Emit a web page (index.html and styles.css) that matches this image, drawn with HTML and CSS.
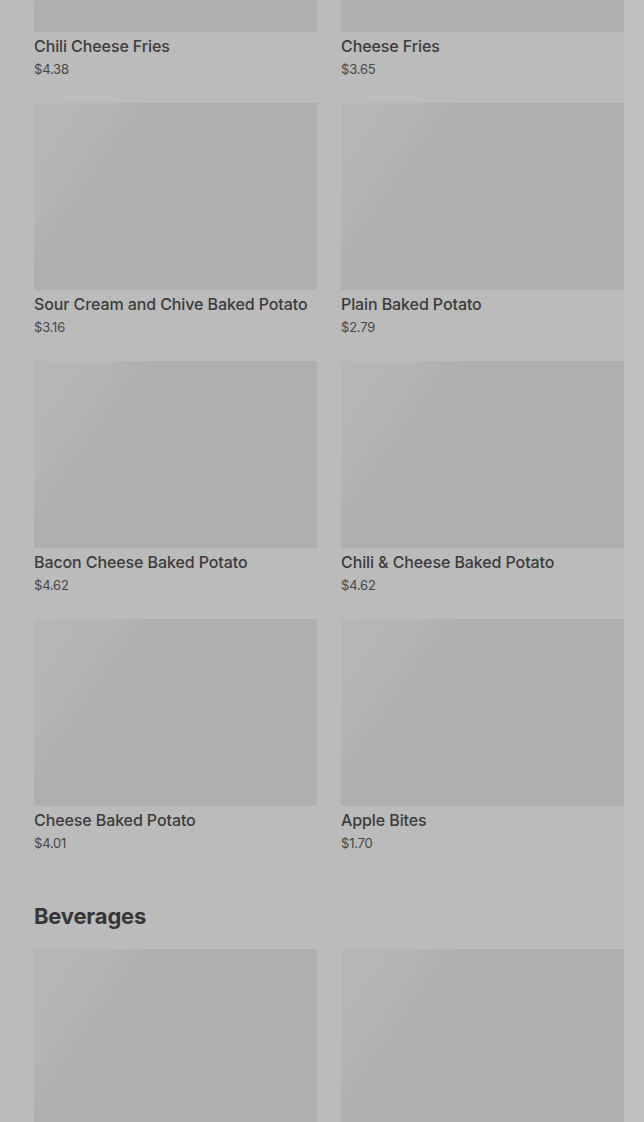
FILE: index.html
```html
<!DOCTYPE html>
<html lang="en">
<head>
  <meta charset="UTF-8">
  <meta name="viewport" content="width=device-width, initial-scale=1.0">
  <title>Menu</title>
  <link rel="stylesheet" href="styles.css">
</head>
<body>
  <div class="page">
    <!-- Sides -->
    <section class="menu-section first">
      <div class="menu-grid">
        <div class="menu-item">
          <div class="item-img"></div>
          <div class="item-name">Chili Cheese Fries</div>
          <div class="item-price">$4.38</div>
        </div>
        <div class="menu-item">
          <div class="item-img"></div>
          <div class="item-name">Cheese Fries</div>
          <div class="item-price">$3.65</div>
        </div>
        <div class="menu-item">
          <div class="item-img"></div>
          <div class="item-name">Sour Cream and Chive Baked Potato</div>
          <div class="item-price">$3.16</div>
        </div>
        <div class="menu-item">
          <div class="item-img"></div>
          <div class="item-name">Plain Baked Potato</div>
          <div class="item-price">$2.79</div>
        </div>
        <div class="menu-item">
          <div class="item-img"></div>
          <div class="item-name">Bacon Cheese Baked Potato</div>
          <div class="item-price">$4.62</div>
        </div>
        <div class="menu-item">
          <div class="item-img"></div>
          <div class="item-name">Chili &amp; Cheese Baked Potato</div>
          <div class="item-price">$4.62</div>
        </div>
        <div class="menu-item">
          <div class="item-img"></div>
          <div class="item-name">Cheese Baked Potato</div>
          <div class="item-price">$4.01</div>
        </div>
        <div class="menu-item">
          <div class="item-img"></div>
          <div class="item-name">Apple Bites</div>
          <div class="item-price">$1.70</div>
        </div>
      </div>
    </section>

    <!-- Beverages -->
    <section class="menu-section">
      <h2 class="section-title">Beverages</h2>
      <div class="menu-grid">
        <div class="menu-item">
          <div class="item-img"></div>
        </div>
        <div class="menu-item">
          <div class="item-img"></div>
        </div>
      </div>
    </section>
  </div>
</body>
</html>
```

FILE: styles.css
```css
/* General Styles */
html, body {
  margin: 0;
  padding: 0;
  height: 100%;
  overflow: hidden;
}

body {
  font-family: 'Inter', 'Liberation Sans', sans-serif;
  background-color: #bfbfbf;
  color: #3b3b3b;
}

.page {
  width: 624px;
  min-height: 100%;
  background-color: #bbbbbb;
  box-sizing: border-box;
  padding-left: 34px;
}

/* Sections */
.menu-section.first {
  margin-top: -155px;
}

.section-title {
  margin: 50px 0 19px;
  font-size: 22px;
  line-height: 28px;
  font-weight: 700;
  letter-spacing: -0.2px;
  color: #363636;
}

.menu-grid {
  display: grid;
  grid-template-columns: 283px 283px;
  column-gap: 24px;
  row-gap: 25px;
}

/* Items - loading placeholders */
.item-img {
  height: 187px;
  background-color: #afafaf;
  background-image: linear-gradient(125deg, #b6b6b6 0%, #b5b5b5 18%, #b1b1b1 25%, #afafaf 30%, #afafaf 100%);
}

.item-name {
  margin-top: 4px;
  font-size: 16px;
  line-height: 20px;
  font-weight: 500;
  letter-spacing: -0.1px;
  color: #3c3c3c;
  white-space: nowrap;
}

.item-price {
  margin-top: 4px;
  font-size: 13px;
  line-height: 18px;
  letter-spacing: -0.2px;
  color: #474747;
}
```
